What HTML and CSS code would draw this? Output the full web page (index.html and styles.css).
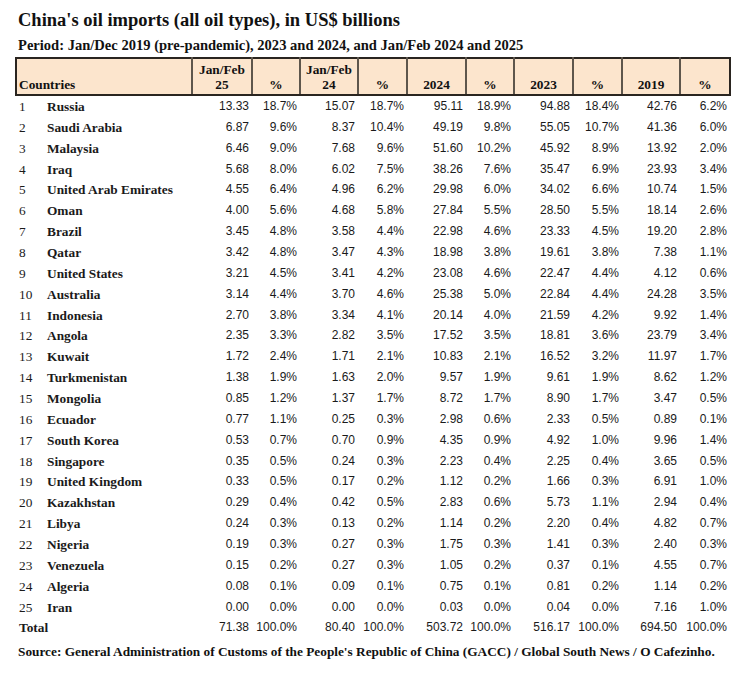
FILE: index.html
```html
<!DOCTYPE html>
<html>
<head>
<meta charset="utf-8">
<link rel="stylesheet" href="styles.css">
</head>
<body>
<div class="page">
  <h1 class="title">China's oil imports (all oil types), in US$ billions</h1>
  <h2 class="subtitle">Period: Jan/Dec 2019 (pre-pandemic), 2023 and 2024, and Jan/Feb 2024 and 2025</h2>
  <table class="data">
    <colgroup>
      <col class="c-rank"><col class="c-name">
      <col class="c-v1"><col class="c-p1">
      <col class="c-v2"><col class="c-p2">
      <col class="c-v3"><col class="c-p3">
      <col class="c-v4"><col class="c-p4">
      <col class="c-v5"><col class="c-p5">
    </colgroup>
    <thead>
      <tr>
        <th colspan="2" class="h-left">Countries</th>
        <th>Jan/Feb<br>25</th><th>%</th>
        <th>Jan/Feb<br>24</th><th>%</th>
        <th>2024</th><th>%</th>
        <th>2023</th><th>%</th>
        <th>2019</th><th>%</th>
      </tr>
    </thead>
    <tbody>
      <tr class="first"><td class="rank">1</td><td class="name">Russia</td><td>13.33</td><td>18.7%</td><td>15.07</td><td>18.7%</td><td>95.11</td><td>18.9%</td><td>94.88</td><td>18.4%</td><td>42.76</td><td>6.2%</td></tr>
      <tr><td class="rank">2</td><td class="name">Saudi Arabia</td><td>6.87</td><td>9.6%</td><td>8.37</td><td>10.4%</td><td>49.19</td><td>9.8%</td><td>55.05</td><td>10.7%</td><td>41.36</td><td>6.0%</td></tr>
      <tr><td class="rank">3</td><td class="name">Malaysia</td><td>6.46</td><td>9.0%</td><td>7.68</td><td>9.6%</td><td>51.60</td><td>10.2%</td><td>45.92</td><td>8.9%</td><td>13.92</td><td>2.0%</td></tr>
      <tr><td class="rank">4</td><td class="name">Iraq</td><td>5.68</td><td>8.0%</td><td>6.02</td><td>7.5%</td><td>38.26</td><td>7.6%</td><td>35.47</td><td>6.9%</td><td>23.93</td><td>3.4%</td></tr>
      <tr><td class="rank">5</td><td class="name">United Arab Emirates</td><td>4.55</td><td>6.4%</td><td>4.96</td><td>6.2%</td><td>29.98</td><td>6.0%</td><td>34.02</td><td>6.6%</td><td>10.74</td><td>1.5%</td></tr>
      <tr><td class="rank">6</td><td class="name">Oman</td><td>4.00</td><td>5.6%</td><td>4.68</td><td>5.8%</td><td>27.84</td><td>5.5%</td><td>28.50</td><td>5.5%</td><td>18.14</td><td>2.6%</td></tr>
      <tr><td class="rank">7</td><td class="name">Brazil</td><td>3.45</td><td>4.8%</td><td>3.58</td><td>4.4%</td><td>22.98</td><td>4.6%</td><td>23.33</td><td>4.5%</td><td>19.20</td><td>2.8%</td></tr>
      <tr><td class="rank">8</td><td class="name">Qatar</td><td>3.42</td><td>4.8%</td><td>3.47</td><td>4.3%</td><td>18.98</td><td>3.8%</td><td>19.61</td><td>3.8%</td><td>7.38</td><td>1.1%</td></tr>
      <tr><td class="rank">9</td><td class="name">United States</td><td>3.21</td><td>4.5%</td><td>3.41</td><td>4.2%</td><td>23.08</td><td>4.6%</td><td>22.47</td><td>4.4%</td><td>4.12</td><td>0.6%</td></tr>
      <tr><td class="rank">10</td><td class="name">Australia</td><td>3.14</td><td>4.4%</td><td>3.70</td><td>4.6%</td><td>25.38</td><td>5.0%</td><td>22.84</td><td>4.4%</td><td>24.28</td><td>3.5%</td></tr>
      <tr><td class="rank">11</td><td class="name">Indonesia</td><td>2.70</td><td>3.8%</td><td>3.34</td><td>4.1%</td><td>20.14</td><td>4.0%</td><td>21.59</td><td>4.2%</td><td>9.92</td><td>1.4%</td></tr>
      <tr><td class="rank">12</td><td class="name">Angola</td><td>2.35</td><td>3.3%</td><td>2.82</td><td>3.5%</td><td>17.52</td><td>3.5%</td><td>18.81</td><td>3.6%</td><td>23.79</td><td>3.4%</td></tr>
      <tr><td class="rank">13</td><td class="name">Kuwait</td><td>1.72</td><td>2.4%</td><td>1.71</td><td>2.1%</td><td>10.83</td><td>2.1%</td><td>16.52</td><td>3.2%</td><td>11.97</td><td>1.7%</td></tr>
      <tr><td class="rank">14</td><td class="name">Turkmenistan</td><td>1.38</td><td>1.9%</td><td>1.63</td><td>2.0%</td><td>9.57</td><td>1.9%</td><td>9.61</td><td>1.9%</td><td>8.62</td><td>1.2%</td></tr>
      <tr><td class="rank">15</td><td class="name">Mongolia</td><td>0.85</td><td>1.2%</td><td>1.37</td><td>1.7%</td><td>8.72</td><td>1.7%</td><td>8.90</td><td>1.7%</td><td>3.47</td><td>0.5%</td></tr>
      <tr><td class="rank">16</td><td class="name">Ecuador</td><td>0.77</td><td>1.1%</td><td>0.25</td><td>0.3%</td><td>2.98</td><td>0.6%</td><td>2.33</td><td>0.5%</td><td>0.89</td><td>0.1%</td></tr>
      <tr><td class="rank">17</td><td class="name">South Korea</td><td>0.53</td><td>0.7%</td><td>0.70</td><td>0.9%</td><td>4.35</td><td>0.9%</td><td>4.92</td><td>1.0%</td><td>9.96</td><td>1.4%</td></tr>
      <tr><td class="rank">18</td><td class="name">Singapore</td><td>0.35</td><td>0.5%</td><td>0.24</td><td>0.3%</td><td>2.23</td><td>0.4%</td><td>2.25</td><td>0.4%</td><td>3.65</td><td>0.5%</td></tr>
      <tr><td class="rank">19</td><td class="name">United Kingdom</td><td>0.33</td><td>0.5%</td><td>0.17</td><td>0.2%</td><td>1.12</td><td>0.2%</td><td>1.66</td><td>0.3%</td><td>6.91</td><td>1.0%</td></tr>
      <tr><td class="rank">20</td><td class="name">Kazakhstan</td><td>0.29</td><td>0.4%</td><td>0.42</td><td>0.5%</td><td>2.83</td><td>0.6%</td><td>5.73</td><td>1.1%</td><td>2.94</td><td>0.4%</td></tr>
      <tr><td class="rank">21</td><td class="name">Libya</td><td>0.24</td><td>0.3%</td><td>0.13</td><td>0.2%</td><td>1.14</td><td>0.2%</td><td>2.20</td><td>0.4%</td><td>4.82</td><td>0.7%</td></tr>
      <tr><td class="rank">22</td><td class="name">Nigeria</td><td>0.19</td><td>0.3%</td><td>0.27</td><td>0.3%</td><td>1.75</td><td>0.3%</td><td>1.41</td><td>0.3%</td><td>2.40</td><td>0.3%</td></tr>
      <tr><td class="rank">23</td><td class="name">Venezuela</td><td>0.15</td><td>0.2%</td><td>0.27</td><td>0.3%</td><td>1.05</td><td>0.2%</td><td>0.37</td><td>0.1%</td><td>4.55</td><td>0.7%</td></tr>
      <tr><td class="rank">24</td><td class="name">Algeria</td><td>0.08</td><td>0.1%</td><td>0.09</td><td>0.1%</td><td>0.75</td><td>0.1%</td><td>0.81</td><td>0.2%</td><td>1.14</td><td>0.2%</td></tr>
      <tr><td class="rank">25</td><td class="name">Iran</td><td>0.00</td><td>0.0%</td><td>0.00</td><td>0.0%</td><td>0.03</td><td>0.0%</td><td>0.04</td><td>0.0%</td><td>7.16</td><td>1.0%</td></tr>
      <tr class="total"><td colspan="2" class="name">Total</td><td>71.38</td><td>100.0%</td><td>80.40</td><td>100.0%</td><td>503.72</td><td>100.0%</td><td>516.17</td><td>100.0%</td><td>694.50</td><td>100.0%</td></tr>
    </tbody>
  </table>
  <p class="source">Source: General Administration of Customs of the People's Republic of China (GACC) / Global South News / O Cafezinho.</p>
</div>
</body>
</html>
```

FILE: styles.css
```css
html, body {
  margin: 0;
  padding: 0;
  background: #ffffff;
}

.page {
  padding: 9px 0 0 15px;
  font-family: "Liberation Serif", "Times New Roman", serif;
  color: #111111;
}

.title {
  margin: 0 0 0 3px;
  font-size: 18.5px;
  line-height: 22px;
  font-weight: bold;
}

.subtitle {
  margin: 5px 0 0 3px;
  font-size: 14.55px;
  line-height: 18px;
  font-weight: bold;
}

.data {
  margin-top: 3px;
  width: 714px;
  table-layout: fixed;
  border-collapse: collapse;
  font-size: 13.33px;
}

.c-rank { width: 29px; }
.c-name { width: 147px; }
.c-v1 { width: 60px; }
.c-p1 { width: 48px; }
.c-v2 { width: 58px; }
.c-p2 { width: 49px; }
.c-v3 { width: 59px; }
.c-p3 { width: 48px; }
.c-v4 { width: 59px; }
.c-p4 { width: 49px; }
.c-v5 { width: 58px; }
.c-p5 { width: 50px; }

.data thead tr {
  height: 37px;
}

.data th {
  background: #fce5cd;
  border: 2px solid #5e564c;
  border-top-color: #2a2520;
  border-bottom-color: #2a2520;
  font-weight: bold;
  text-align: center;
  vertical-align: bottom;
  padding: 2px 2px 2px 2px;
  line-height: 15px;
}

.data th:first-child {
  border-left-color: #2a2520;
}

.data th:last-child {
  border-right-color: #2a2520;
}

.data th.h-left {
  text-align: left;
  padding-left: 2px;
}

.data td {
  padding: 0 3px 0 2px;
  height: 20.86px;
  line-height: 15px;
  text-align: right;
  vertical-align: middle;
  font-family: "Liberation Sans", Arial, sans-serif;
  font-size: 12px;
  color: #1a1a1a;
}

.data td.rank {
  text-align: left;
  font-family: "Liberation Serif", "Times New Roman", serif;
  font-size: 13.33px;
  padding-left: 3px;
}

.data td.name {
  text-align: left;
  font-family: "Liberation Serif", "Times New Roman", serif;
  font-size: 13.33px;
  font-weight: bold;
}

.data tr.total td.name {
  padding-left: 3px;
}

.source {
  margin: 5px 0 0 3px;
  font-size: 13.3px;
  line-height: 18px;
  font-weight: bold;
}
```
